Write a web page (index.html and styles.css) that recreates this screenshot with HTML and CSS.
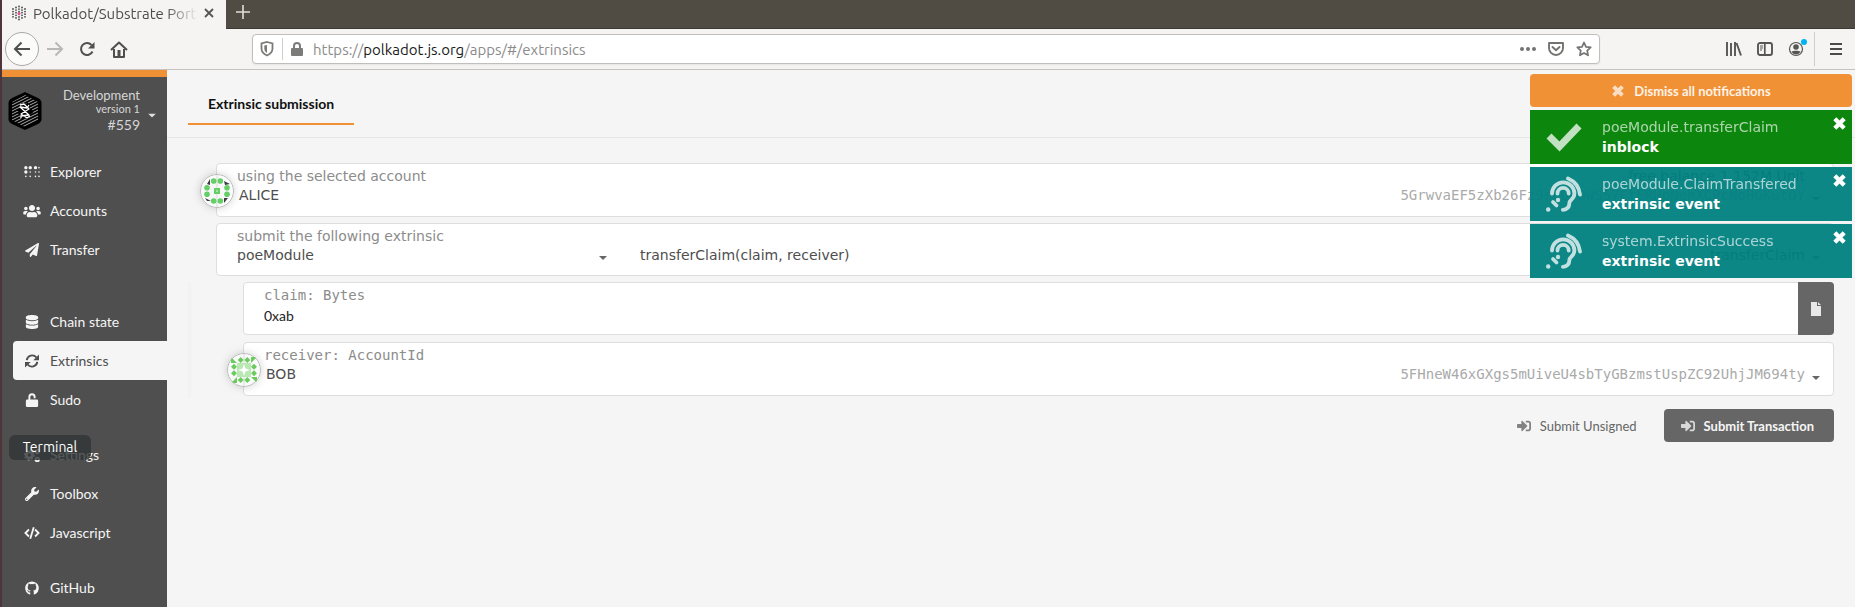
FILE: index.html
```html
<!DOCTYPE html>
<html lang="en">
<head>
<meta charset="utf-8">
<title>Polkadot/Substrate Portal</title>
<meta name="viewport" content="width=device-width, initial-scale=1">
<link rel="stylesheet" href="styles.css">
</head>
<body>
<svg class="sprite" aria-hidden="true">
  <symbol id="times" viewBox="0 0 16 16"><path d="M3 3l10 10M13 3L3 13" stroke="currentColor" stroke-width="4.6"/></symbol>
  <symbol id="ear" viewBox="0 0 36 36"><g fill="none" stroke="currentColor" stroke-width="3.800" stroke-linecap="round"><path d="M22 2.500A20 20 0 0 1 34 18.500"/><path d="M6 17.500a11.200 11.200 0 0 1 22.400 0c0 6-4.900 6-5 9.500-.1 4-2.500 6.500-6.500 6.800"/><path d="M11.500 17.500a5.600 5.600 0 0 1 11.200 0"/><path d="M7 26l3.500 3.500"/></g><g fill="currentColor"><circle cx="2.200" cy="33.500" r="2.200"/><circle cx="12" cy="24" r="2.200"/></g></symbol>
  <symbol id="signin" viewBox="0 0 512 512"><path fill="currentColor" d="M416 448h-84c-6.600 0-12-5.400-12-12v-40c0-6.600 5.400-12 12-12h84c17.700 0 32-14.300 32-32V160c0-17.700-14.300-32-32-32h-84c-6.600 0-12-5.400-12-12V76c0-6.600 5.400-12 12-12h84c53 0 96 43 96 96v192c0 53-43 96-96 96zm-47-209L201 71c-15-15-41-4.500-41 17v96H24c-13.300 0-24 10.700-24 24v96c0 13.300 10.700 24 24 24h136v96c0 21.500 26 32 41 17l168-168c9.300-9.400 9.300-24.600 0-34z"/></symbol>
  <symbol id="caret" viewBox="0 0 8 4"><path fill="currentColor" d="M0 0h8L4 4z"/></symbol>
</svg>

<header class="browser">
  <div class="tabs">
    <div class="tab">
      <svg class="tab-icon" viewBox="0 0 16 16" aria-hidden="true"><g fill="none" stroke="#4a4a4a" stroke-width="1.800" stroke-linecap="round" stroke-dasharray="0 2.600"><path d="M2 4v9M5 2.500v12M8 1.500v14M11 2.500v12M14 4v9"/></g><circle cx="8" cy="8.500" r="1.500" fill="#e6529b"/></svg>
      <span class="tab-title">Polkadot/Substrate Portal</span>
      <button class="plain" aria-label="Close tab"><svg width="10" height="10" viewBox="0 0 10 10"><path d="M1 1l8 8M9 1L1 9" stroke="#555" stroke-width="1.800"/></svg></button>
    </div>
    <button class="plain new-tab" aria-label="New tab"><svg width="14" height="14" viewBox="0 0 14 14"><path d="M7 0v14M0 7h14" stroke="#e0ded8" stroke-width="1.600"/></svg></button>
  </div>
  <div class="toolbar">
    <button class="plain back" aria-label="Back"><svg width="18" height="16" viewBox="0 0 18 16"><path d="M17 8H2M8.500 1.500L2 8l6.500 6.500" fill="none" stroke="#4f4f4c" stroke-width="2"/></svg></button>
    <button class="plain" aria-label="Forward"><svg width="18" height="16" viewBox="0 0 18 16"><path d="M1 8h15M9.500 1.500L16 8l-6.500 6.500" fill="none" stroke="#b9b8b5" stroke-width="2"/></svg></button>
    <button class="plain" aria-label="Reload"><svg width="16" height="16" viewBox="0 0 16 16"><path d="M13.500 10.500A6 6 0 1 1 12.500 4" fill="none" stroke="#4f4f4c" stroke-width="2"/><path d="M15.500 1v6.500H9z" fill="#4f4f4c"/></svg></button>
    <button class="plain" aria-label="Home"><svg width="18" height="17" viewBox="0 0 18 17"><path d="M1 9l8-7.500L17 9M4 8v8h10V8" fill="none" stroke="#4f4f4c" stroke-width="2" stroke-linejoin="round"/><path d="M7.500 9h3v6h-3z" fill="#4f4f4c"/></svg></button>
    <div class="url">
      <svg width="14" height="16" viewBox="0 0 14 16" aria-hidden="true"><path d="M7 1l5.500 1.500v5c0 3-2 5.500-5.500 7-3.500-1.500-5.500-4-5.500-7v-5z" fill="none" stroke="#7b7b79" stroke-width="1.800"/><path d="M7 4v8c-2-1-2.700-3-2.700-4.500v-3z" fill="#7b7b79"/></svg>
      <span class="rule"></span>
      <svg width="12" height="14" viewBox="0 0 12 14" aria-hidden="true"><path d="M3 7V4a3 3 0 0 1 6 0v3" fill="none" stroke="#7b7b79" stroke-width="2"/><rect y="6" width="12" height="8" rx="1" fill="#7b7b79"/></svg>
      <span class="address">https://<b>polkadot.js.org</b>/apps/#/extrinsics</span>
      <svg width="16" height="4" viewBox="0 0 16 4" aria-hidden="true"><g fill="#737371"><circle cx="2" cy="2" r="2"/><circle cx="8" cy="2" r="2"/><circle cx="14" cy="2" r="2"/></g></svg>
      <svg width="16" height="14" viewBox="0 0 16 14" aria-hidden="true"><path d="M1 1h14v5a7 7 0 0 1-14 0zM4.500 5L8 8.300 11.500 5" fill="none" stroke="#737371" stroke-width="1.900" stroke-linejoin="round" stroke-linecap="round"/></svg>
      <svg width="16" height="16" viewBox="0 0 16 16" aria-hidden="true"><path d="M8 1.500l2 4.300 4.700.6-3.500 3.200.9 4.700L8 12l-4.100 2.300.9-4.700L1.300 6.400 6 5.800z" fill="none" stroke="#737371" stroke-width="1.700" stroke-linejoin="round"/></svg>
    </div>
    <div class="tools">
      <button class="plain" aria-label="Library"><svg width="16" height="14" viewBox="0 0 16 14"><path d="M1 0v14M5 1v13M9 0v14M10.500 1l4.500 12.500" stroke="#555552" stroke-width="1.900"/></svg></button>
      <button class="plain" aria-label="Sidebars"><svg width="16" height="14" viewBox="0 0 16 14"><rect x="1" y="1" width="14" height="12" rx="2" fill="none" stroke="#555552" stroke-width="1.900"/><path d="M7.800 1v12" stroke="#555552" stroke-width="1.700"/><path d="M3 4h3M3 6h3M3 8h2" stroke="#555552"/></svg></button>
      <button class="plain account" aria-label="Account"><svg width="16" height="16" viewBox="0 0 16 16"><circle cx="8" cy="8" r="6.500" fill="none" stroke="#555552" stroke-width="1.200"/><circle cx="8" cy="6" r="2.800" fill="#555552"/><path d="M3.500 10.500c2-1 7-1 9 0-1 2-2.500 3-4.500 3s-3.500-1-4.500-3z" fill="#555552"/></svg></button>
      <span class="rule"></span>
      <button class="plain" aria-label="Menu"><svg width="12" height="12" viewBox="0 0 12 12"><path d="M0 1h12M0 6h12M0 11h12" stroke="#4a4a47" stroke-width="2"/></svg></button>
    </div>
  </div>
</header>

<div class="app">
  <aside class="sidebar">
    <button class="plain chain">
      <svg class="logo" width="34" height="38" viewBox="0 0 34 38" aria-hidden="true"><defs><clipPath id="hex"><path d="M17 3l13 7v18l-13 7-13-7V10z"/></clipPath></defs><path d="M17 0l13 6q3.500 2 3.500 5v16q0 3-3.500 5l-13 6-13-6q-3.500-2-3.500-5V11q0-3 3.500-5z" fill="#000"/><g clip-path="url(#hex)" stroke="#aaa" stroke-width="1"><path d="M0 12l34-17M0 15l34-17M0 18L34 1M0 21L34 4M0 24L34 7M0 27l34-17M0 30l34-17M0 33l34-17M0 36l34-17M0 39l34-17M0 42l34-17M0 45l34-17M0 48l34-17"/></g><path d="M13 12l8 6-8 3 8 5M21 12l-8 6 8 3-8 5" fill="none" stroke="#000" stroke-width="4"/><path d="M12 13l4-1 5 5-8 5 6 4 3-2M21 13l-2 3-7-1 9 8-8 1 0 2" fill="none" stroke="#fff" stroke-width="1.300" stroke-linejoin="round"/></svg>
      <span class="chain-info"><span class="chain-name">Development</span><span class="version">version 1</span><span>#559</span></span>
      <svg class="chain-caret" width="8" height="5" viewBox="0 0 8 4" aria-hidden="true"><use href="#caret"/></svg>
    </button>
    <nav>
      <a href="#"><svg viewBox="0 0 18 16"><g fill="currentColor"><circle cx="2" cy="3" r="1.900"/><circle cx="7" cy="3" r="1.900"/><circle cx="13" cy="3" r="1.900"/><circle cx="17" cy="3" r=".9"/><circle cx="2" cy="8" r="1.900"/><circle cx="7" cy="8" r=".9"/><circle cx="13" cy="8" r=".9"/><circle cx="17" cy="8" r=".9"/><circle cx="2" cy="13" r=".9"/><circle cx="7" cy="13" r=".9"/><circle cx="13" cy="13" r=".9"/><circle cx="17" cy="13" r=".9"/></g></svg>Explorer</a>
      <a href="#"><svg viewBox="0 0 640 512"><path fill="currentColor" d="M96 224c35 0 64-29 64-64s-29-64-64-64-64 29-64 64 29 64 64 64zm448 0c35 0 64-29 64-64s-29-64-64-64-64 29-64 64 29 64 64 64zm32 32h-64c-18 0-34 7-45 19 40 22 69 62 75 109h66c18 0 32-14 32-32v-32c0-35-29-64-64-64zm-256 0c62 0 112-50 112-112S382 32 320 32 208 82 208 144s50 112 112 112zm77 32h-8c-42 20-96 20-138 0h-8c-64 0-115 52-115 115v29c0 27 21 48 48 48h288c27 0 48-21 48-48v-29c0-63-51-115-115-115zm-223-13c-12-12-28-19-46-19H64c-35 0-64 29-64 64v32c0 18 14 32 32 32h66c6-47 35-87 76-109z"/></svg>Accounts</a>
      <a href="#"><svg viewBox="0 0 512 512"><path fill="currentColor" d="M476 3L12 271c-18 10-16 35 2 43l107 45L409 105c5-5 13 2 8 8L176 407v80c0 24 28 33 42 16l64-78 125 53c14 6 31-3 33-19l72-432c3-20-18-35-36-24z"/></svg>Transfer</a>
      <a class="section" href="#"><svg viewBox="0 0 512 512"><path fill="currentColor" d="M480 73v46c0 40-100 73-224 73S32 159 32 119V73C32 33 132 0 256 0s224 33 224 73zm0 103v103c0 40-100 73-224 73S32 319 32 279V176c48 33 136 48 224 48s176-15 224-48zm0 160v103c0 40-100 73-224 73S32 479 32 439V336c48 33 136 48 224 48s176-15 224-48z"/></svg>Chain state</a>
      <a class="active" href="#" aria-current="page"><svg viewBox="0 0 16 16"><g fill="none" stroke="currentColor" stroke-width="2.200"><path d="M2 7a6.200 6.200 0 0 1 11-3M14 9a6.200 6.200 0 0 1-11 3"/></g><path d="M16 .5V7H9.500zM0 15.500V9h6.500z" fill="currentColor"/></svg>Extrinsics</a>
      <a href="#"><svg viewBox="0 0 16 16"><path d="M5 8V4.500a3 3 0 0 1 6 0V6" fill="none" stroke="currentColor" stroke-width="2.200"/><rect x="1" y="7.500" width="14" height="8.500" rx="1.500" fill="currentColor"/></svg>Sudo</a>
      <a class="group" href="#"><svg viewBox="0 0 18 16"><g fill="none" stroke="currentColor"><circle cx="6" cy="8" r="3.500" stroke-width="3"/><circle cx="6" cy="8" r="5.200" stroke-width="2" stroke-dasharray="2 2"/><circle cx="15" cy="4" r="2" stroke-width="2"/><circle cx="15" cy="13" r="2" stroke-width="2"/></g></svg>Settings</a>
      <a href="#"><svg viewBox="0 0 512 512"><path fill="currentColor" d="M508 109c-2-9-14-12-21-5l-74 74-68-11-11-68 74-74c7-7 4-19-6-21-47-12-99 1-136 38-40 39-51 96-35 146L19 400c-25 25-25 66 0 91s66 25 91 0l212-212c50 17 106 6 146-34 37-37 50-89 40-136zM64 472c-13 0-24-11-24-24s11-24 24-24 24 11 24 24-11 24-24 24z"/></svg>Toolbox</a>
      <a href="#"><svg viewBox="0 0 18 16"><path d="M5.500 4L1.500 8l4 4M12.500 4l4 4-4 4M11 1.500L7 14.500" fill="none" stroke="currentColor" stroke-width="2.100"/></svg>Javascript</a>
      <a class="group" href="#"><svg viewBox="0 0 16 16"><path fill="currentColor" fill-rule="evenodd" d="M8 .5a7.700 7.700 0 0 0-2.600 15c.4.100.6-.2.600-.5v-2c-2 .4-2.600-.8-2.800-1.500-.3-.6-.6-.9-1-1.200.8-.2 1.500.3 1.900 1 .5.700 1.100.8 1.900.5.100-.5.300-.8.600-1-2-.3-3.500-1.200-3.500-3.800 0-.9.300-1.600.8-2.100-.2-.5-.2-1.200.1-2 .8 0 1.500.4 2.100.8a7 7 0 0 1 3.800 0c.6-.4 1.300-.8 2.100-.8.300.8.300 1.500.1 2 .5.500.8 1.200.8 2.100 0 2.600-1.500 3.500-3.500 3.800.4.300.6.900.6 1.700V15c0 .3.200.6.600.5A7.700 7.700 0 0 0 8 .5z"/></svg>GitHub</a>
    </nav>
    <div class="tooltip" role="tooltip">Terminal</div>
  </aside>

  <main>
    <div class="page-tabs"><a class="page-tab" href="#">Extrinsic submission</a></div>
    <form class="form">
      <button type="button" class="plain field has-icon">
        <svg class="identicon" viewBox="0 0 34 34" aria-hidden="true"><circle cx="17" cy="17" r="16.500" fill="#fff" fill-opacity=".85" stroke="#bbb"/><path d="M17 1v32" stroke="#ddd"/><path d="M10 5v6l-3-1zM24 7l6 3-5 1zM5 24l6 3-4 0zM24 29v-5h4z" fill="#3d3d45"/><g fill="#64cf67"><circle cx="13.700" cy="7" r="2.800"/><circle cx="20.300" cy="7" r="2.800"/><circle cx="13.700" cy="27" r="2.800"/><circle cx="20.300" cy="27" r="2.800"/><circle cx="7" cy="13.700" r="2.800"/><circle cx="7" cy="20.300" r="2.800"/><circle cx="27" cy="13.700" r="2.800"/><circle cx="27" cy="20.300" r="2.800"/><path d="M14 14h6v6h-6z"/></g><path d="M16 16h2v2h-2z" fill="#a4e3a5"/></svg>
        <span class="label">using the selected account</span><span class="label balance">free balance 1.152M Unit</span>
        <span class="value name">ALICE</span><span class="hash">5GrwvaEF5zXb26Fz9rcQpDWS57CtERHpNehXCPcNoHGKutQY</span>
        <svg class="caret" aria-hidden="true"><use href="#caret"/></svg>
      </button>
      <div class="field call">
        <button type="button" class="plain half"><span class="label">submit the following extrinsic</span><span class="value">poeModule</span><svg class="caret" aria-hidden="true"><use href="#caret"/></svg></button>
        <button type="button" class="plain half"><span class="value">transferClaim(claim, receiver)</span><span class="hint">transferClaim</span><svg class="caret" aria-hidden="true"><use href="#caret"/></svg></button>
      </div>
      <div class="params">
        <div class="field bytes">
          <div class="bytes-text"><label class="label mono" for="claim">claim: Bytes</label><input id="claim" type="text" value="0xab"></div>
          <button type="button" class="plain file" aria-label="Load file"><svg width="10" height="14" viewBox="0 0 10 14"><path d="M0 0h6v4h4v10H0zM7 0l3 3H7z" fill="#e8e8e8"/></svg></button>
        </div>
        <button type="button" class="plain field has-icon">
          <svg class="identicon" viewBox="0 0 34 34" aria-hidden="true"><circle cx="17" cy="17" r="16.500" fill="#fff" fill-opacity=".85" stroke="#bbb"/><path d="M17 1v32" stroke="#ddd"/><path d="M10 10h14v14H10z" fill="#b9e8b3"/><path d="M17 11l1.500 4.500L23 17l-4.500 1.500L17 23l-1.500-4.500L11 17l4.500-1.500z" fill="#fff"/><path d="M4 4v6h6zM30 4h-6v6zM4 30h6v-6zM30 30v-6h-6zM13.700 4l3 3-3 3-3-3zM20.300 4l3 3-3 3-3-3zM13.700 24l3 3-3 3-3-3zM20.300 24l3 3-3 3-3-3zM7 10.700l3 3-3 3-3-3zM7 17.300l3 3-3 3-3-3zM27 10.700l3 3-3 3-3-3zM27 17.300l3 3-3 3-3-3z" fill="#6ccb5f"/></svg>
          <span class="label mono full">receiver: AccountId</span>
          <span class="value name">BOB</span><span class="hash">5FHneW46xGXgs5mUiveU4sbTyGBzmstUspZC92UhjJM694ty</span>
          <svg class="caret" aria-hidden="true"><use href="#caret"/></svg>
        </button>
      </div>
      <div class="actions">
        <button type="button" class="plain btn"><svg aria-hidden="true"><use href="#signin"/></svg>Submit Unsigned</button>
        <button type="button" class="plain btn primary"><svg aria-hidden="true"><use href="#signin"/></svg>Submit Transaction</button>
      </div>
    </form>
  </main>

  <section class="notices" aria-label="Notifications">
    <button class="plain dismiss"><svg aria-hidden="true"><use href="#times"/></svg>Dismiss all notifications</button>
    <article class="notice success"><svg class="notice-icon" viewBox="0 0 36 36" aria-hidden="true"><path d="M3 17l10.500 10.500L33 7" fill="none" stroke="currentColor" stroke-width="7"/></svg><div><p>poeModule.transferClaim</p><strong>inblock</strong></div><button class="plain close" aria-label="Close"><svg><use href="#times"/></svg></button></article>
    <article class="notice"><svg class="notice-icon" aria-hidden="true"><use href="#ear"/></svg><div><p>poeModule.ClaimTransfered</p><strong>extrinsic event</strong></div><button class="plain close" aria-label="Close"><svg><use href="#times"/></svg></button></article>
    <article class="notice"><svg class="notice-icon" aria-hidden="true"><use href="#ear"/></svg><div><p>system.ExtrinsicSuccess</p><strong>extrinsic event</strong></div><button class="plain close" aria-label="Close"><svg><use href="#times"/></svg></button></article>
  </section>
</div>
</body>
</html>
```
FILE: styles.css
```css
* { box-sizing: border-box; }
html, body { height: 100%; }
body {
  margin: 0;
  display: flex;
  flex-direction: column;
  overflow: hidden;
  border-left: 2px solid #4e353c;
  background: #f5f5f5;
  font-family: Lato, sans-serif;
  font-size: 14px;
}
svg { flex: none; display: block; }
.sprite { display: none; }
.plain { margin: 0; padding: 0; border: 0; background: none; font: inherit; color: inherit; text-align: left; }

/* Browser frame */
.browser { flex: none; font-family: Ubuntu, "Noto Sans", sans-serif; font-size: 15px; }
.tabs { display: flex; height: 29px; background: #504c44; border-bottom: 1px solid #3c3934; }
.tab { display: flex; align-items: center; gap: 6px; width: 224px; height: 29px; padding: 0 12px 3px 9px; background: #f5f4f2; color: #4c4c4c; }
.tab-icon { width: 16px; height: 16px; }
.tab-title { flex: 1; overflow: hidden; white-space: nowrap; -webkit-mask-image: linear-gradient(to left, transparent, #000 32px); mask-image: linear-gradient(to left, transparent, #000 32px); }
.new-tab { padding: 0 10px 4px; }
.toolbar { display: flex; align-items: center; height: 41px; padding: 0 13px 0 3px; gap: 15px; background: #f5f4f2; border-bottom: 1px solid #c4c3c0; }
.back { display: flex; align-items: center; justify-content: center; width: 34px; height: 34px; margin-right: -8px; border: 1px solid #aaa9a6; border-radius: 50%; background: #fbfbfa; }
.url { flex: 1; display: flex; align-items: center; gap: 12px; height: 30px; margin-left: 109px; margin-right: 111px; padding: 0 7px; border: 1px solid #c0bfbc; border-radius: 4px; background: #fff; box-shadow: 0 1px 2px #0001; }
.url .rule { margin: 0 -4px; height: 22px; }
.address { flex: 1; margin-left: -2px; color: #8b8b8b; }
.address b { font-weight: 400; color: #1a1a1a; }
.rule { width: 1px; height: 34px; background: #cfcecb; }
.tools { display: flex; align-items: center; gap: 15px; }
.tools .rule { margin-left: -5px; }
.account { position: relative; }
.account::after { content: ""; position: absolute; top: -2px; right: -3px; width: 6px; height: 6px; border-radius: 50%; background: #00b3f4; }

/* Application */
.app { position: relative; flex: 1; min-height: 0; display: flex; }
.sidebar { position: relative; flex: none; width: 165px; border-top: 7px solid #f19135; background: #4f4f4f; color: #f5f5f5; }
.chain { display: flex; align-items: center; width: 100%; height: 68px; padding: 0 11px 0 6px; }
.chain-info { flex: 1; display: flex; flex-direction: column; padding-right: 8px; text-align: right; line-height: 18px; color: #d6d6d6; }
.chain-name { font-size: 13px; line-height: 14px; }
.version { font-size: 11px; line-height: 14px; }
.chain-caret { margin-top: 9px; color: #e0e0e0; }
nav { display: flex; flex-direction: column; padding: 7px 0 0 11px; }
nav a { display: flex; align-items: center; gap: 9px; height: 39px; padding-left: 10px; border-radius: 4px 0 0 4px; color: #f5f5f5; text-decoration: none; }
nav a svg { width: 18px; height: 14px; }
nav .section { margin-top: 33px; }
nav .group { margin-top: 16px; }
nav .active { background: #f5f5f5; color: #4e4e4e; }
.tooltip { position: absolute; left: 7px; top: 358px; width: 82px; height: 25px; border-radius: 6px; background: #303536cc; color: #fff; font: 14px/25px Ubuntu, "Noto Sans", sans-serif; text-align: center; }

main { flex: 1; min-width: 0; }
.page-tabs { display: flex; height: 68px; padding: 0 21px; border-bottom: 1px solid #e6e6e6; }
.page-tab { height: 55px; padding: 0 20px; border-bottom: 2px solid #f19135; line-height: 67px; font-weight: 700; color: #111; text-decoration: none; }
.form { display: flex; flex-direction: column; gap: 6px; padding: 25px 21px 0 49px; font-family: "DejaVu Sans", sans-serif; }
.field { position: relative; width: 100%; height: 54px; border: 1px solid #dededf; border-radius: 4px; background: #fff; }
.has-icon { display: grid; grid-template-columns: 1fr auto; align-content: start; padding: 2px 28px 0 20px; }
.label { line-height: 20px; color: #8c8c8c; }
.full { grid-column: 1 / -1; }
.value { line-height: 18px; color: #4e4e4e; }
.name { padding-left: 2px; }
.balance { text-align: right; color: #4e4e4e; }
.mono, .hash { font-family: "DejaVu Sans Mono", monospace; }
.hash { line-height: 18px; color: #aaa; }
.caret { position: absolute; right: 13px; bottom: 15px; width: 8px; height: 4px; color: #666; }
.identicon { position: absolute; left: -17px; top: 10px; width: 34px; height: 34px; border-radius: 50%; filter: drop-shadow(0 0 4px #0003); }
.call { display: grid; grid-template-columns: 403px 1fr; height: 53px; }
.half { position: relative; display: flex; align-items: end; flex-wrap: wrap; align-content: end; padding: 0 28px 11px 20px; }
.half .label { width: 100%; }
.half .value { flex: 1; }
.half .hint { line-height: 18px; color: #4e4e4e; }
.params { display: flex; flex-direction: column; gap: 7px; margin-left: -28px; padding: 0 0 2px 52px; border-left: 3px solid #f2f2f2; }
.bytes { display: flex; height: 53px; }
.bytes-text { flex: 1; display: flex; flex-direction: column; padding: 2px 20px 0; }
.bytes input { border: 0; padding: 0; outline: 0; height: 20px; background: none; font: 14px Lato, sans-serif; color: #222; }
.file { display: flex; align-items: center; justify-content: center; width: 36px; margin: -1px; border-radius: 0 4px 4px 0; background: #666; }
.actions { display: flex; justify-content: flex-end; gap: 7px; margin-top: 5px; font-family: Lato, sans-serif; font-size: 13px; }
.btn { display: flex; align-items: center; gap: 9px; height: 33px; padding: 0 20px 0 17px; border-radius: 4px; color: #666; }
.btn svg { width: 14px; height: 14px; opacity: .8; }
.primary { background: #666; color: #f5f5f5; font-weight: 700; }

/* Notifications overlay the page's top right corner */
.notices { position: absolute; top: 4px; right: 3px; width: 322px; display: flex; flex-direction: column; gap: 3px; font-family: "DejaVu Sans", sans-serif; }
.dismiss { display: flex; align-items: center; justify-content: center; gap: 9px; height: 33px; border-radius: 4px; background: #f19135; color: #fdf2e7; font: 700 13px Lato, sans-serif; }
.dismiss svg { width: 14px; height: 14px; opacity: .8; }
.notice { position: relative; display: flex; align-items: center; height: 54px; padding-left: 16px; gap: 20px; background: #008080f2; color: #fff; }
.success { background: #008000f2; }
.notice-icon { width: 36px; height: 36px; opacity: .75; }
.notice p { margin: 0; line-height: 20px; opacity: .65; }
.notice strong { display: block; line-height: 20px; }
.close { position: absolute; top: 6px; right: 5px; }
.close svg { width: 15px; height: 15px; }
```
